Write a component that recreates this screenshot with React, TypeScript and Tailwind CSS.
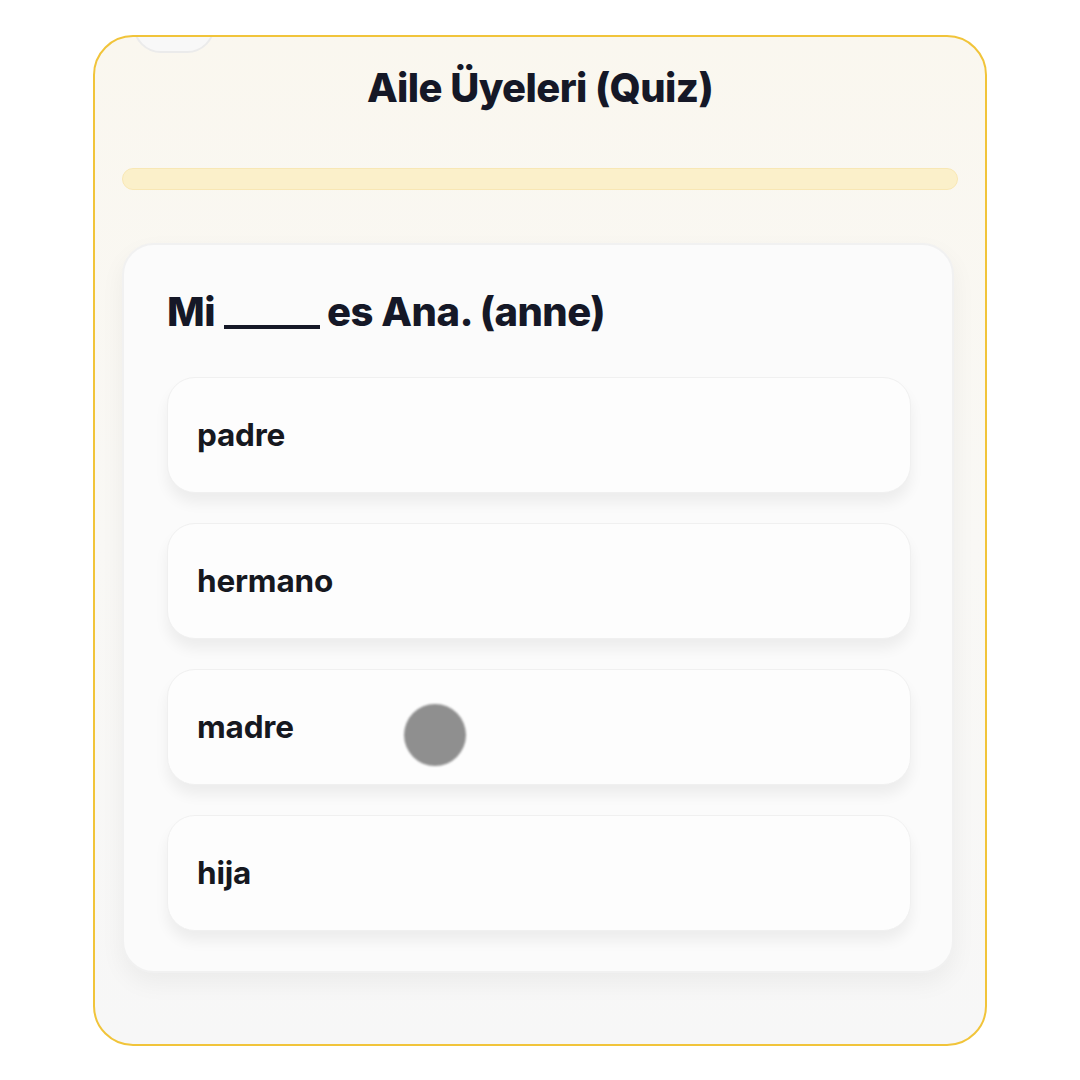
import React from "react";

const options = ["padre", "hermano", "madre", "hija"];

export default function App() {
  return (
    <div
      className="w-[1080px] h-[1080px] bg-white pt-[35px] pl-[93px]"
      style={{ fontFamily: "Inter, 'Noto Sans', sans-serif" }}
    >
      <div className="relative w-[894px] h-[1011px] rounded-[40px] border-2 border-[#f1c43a] bg-gradient-to-b from-[#faf7ef] via-[#f9f8f5] to-[#f7f7f7] overflow-hidden flex flex-col px-[27px]">
        <div className="absolute left-[38px] top-[-40px] w-[82px] h-[56px] rounded-full border-2 border-[#ebebeb] bg-[#f8f8f8]" />
        <h1 className="mt-[29px] h-[44px] text-center text-[40px] leading-[44px] font-extrabold tracking-[-0.6px] text-[#151827]">
          Aile Üyeleri (Quiz)
        </h1>
        <div className="mt-[58px] h-[22px] rounded-full bg-[#fbf0ca] border border-[#f8e7b4]" />
        <div className="mt-[53px] w-[832px] rounded-[32px] border-2 border-[#f1f1f1] bg-[#fbfbfb] shadow-[0_10px_24px_rgba(0,0,0,0.05)] pl-[43px] pr-[41px] pt-[45px] pb-[40px]">
          <div className="flex items-end text-[40px] leading-[44px] font-extrabold tracking-[-0.5px] text-[#151827]">
            <span>Mi</span>
            <span className="ml-[9px] mr-[7px] mb-[5px] w-[96px] h-[4px] bg-[#151827]" />
            <span>es Ana. (anne)</span>
          </div>
          <div className="mt-[43px] flex flex-col gap-[30px]">
            {options.map((o) => (
              <div
                key={o}
                className="relative h-[116px] rounded-[28px] bg-[#fdfdfd] border border-[#f0f0f0] shadow-[0_10px_14px_rgba(0,0,0,0.06)] flex items-center pl-[29px] text-[31.5px] font-bold tracking-[-0.2px] text-[#16181f]"
              >
                {o}
                {o === "madre" && (
                  <span className="absolute left-[236px] top-[34px] w-[62px] h-[62px] rounded-full bg-[#8f8f8f] blur-[0.8px]" />
                )}
              </div>
            ))}
          </div>
        </div>
      </div>
    </div>
  );
}
